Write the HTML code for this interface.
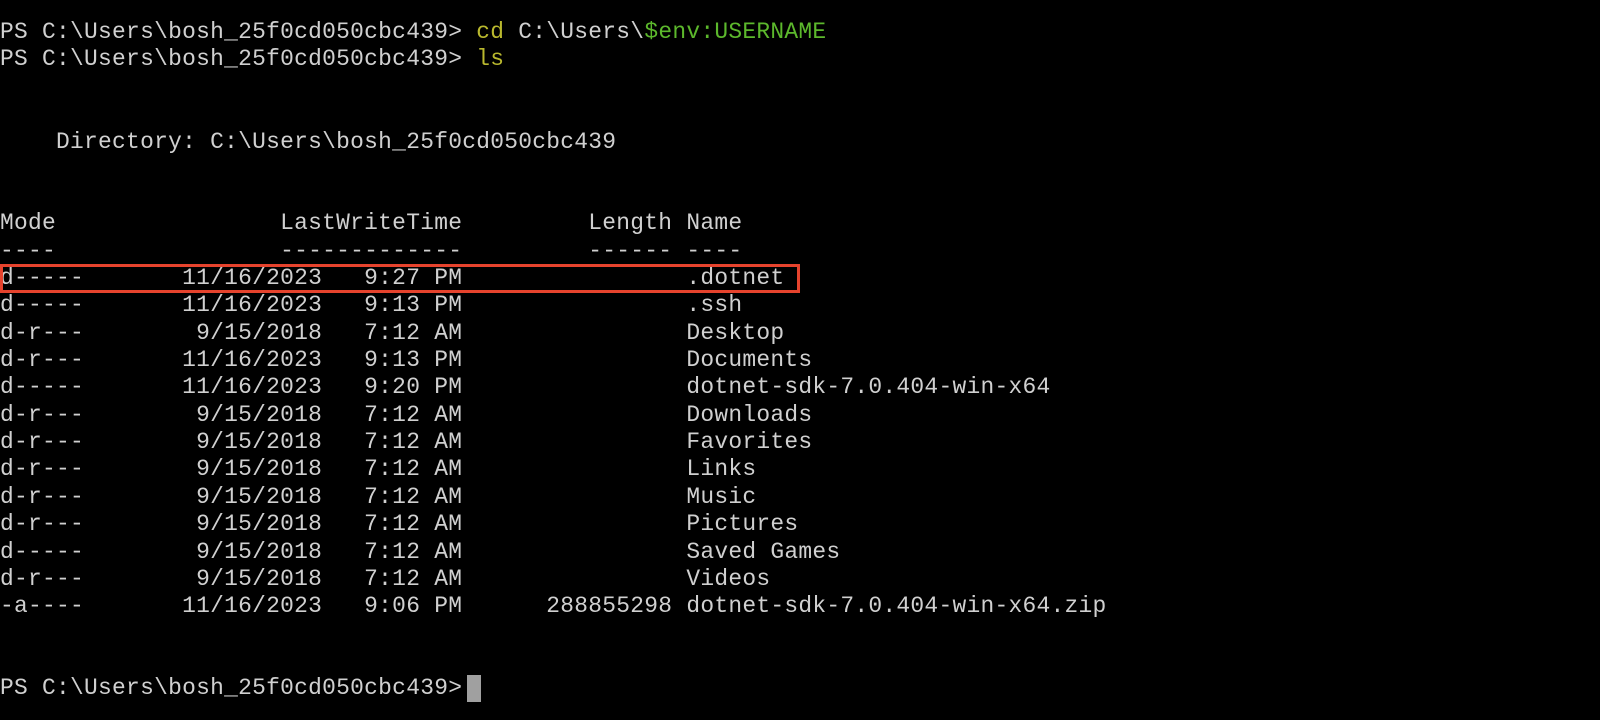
<!DOCTYPE html>
<html><head><meta charset="utf-8"><style>
html,body{margin:0;padding:0;background:#000;width:1600px;height:720px;overflow:hidden}
.l{position:absolute;left:0;height:27px;line-height:27px;white-space:pre;font-family:"Liberation Mono",monospace;font-size:22.9px;letter-spacing:0.27px;color:#d0d0d0;margin-top:1.5px}
.y{color:#b9b82e}.g{color:#5cb82c}
.box{position:absolute;left:0;top:264px;width:794px;height:23px;border:3px solid #e6432d}
.cur{position:absolute;left:467px;top:675px;width:14px;height:27px;background:#a0a0a0}
</style></head><body>
<div class="l" style="top:17.5px">PS C:\Users\bosh_25f0cd050cbc439&gt; <span class="y">cd</span> C:\Users\<span class="g">$env:USERNAME</span></div>
<div class="l" style="top:44.9px">PS C:\Users\bosh_25f0cd050cbc439&gt; <span class="y">ls</span></div>
<div class="l" style="top:127px">    Directory: C:\Users\bosh_25f0cd050cbc439</div>
<div class="l" style="top:208.6px">Mode                LastWriteTime         Length Name</div>
<div class="l" style="top:236px">----                -------------         ------ ----</div>
<div class="l" style="top:263.3px">d-----       11/16/2023   9:27 PM                .dotnet</div>
<div class="l" style="top:290.7px">d-----       11/16/2023   9:13 PM                .ssh</div>
<div class="l" style="top:318.1px">d-r---        9/15/2018   7:12 AM                Desktop</div>
<div class="l" style="top:345.5px">d-r---       11/16/2023   9:13 PM                Documents</div>
<div class="l" style="top:372.8px">d-----       11/16/2023   9:20 PM                dotnet-sdk-7.0.404-win-x64</div>
<div class="l" style="top:400.2px">d-r---        9/15/2018   7:12 AM                Downloads</div>
<div class="l" style="top:427.6px">d-r---        9/15/2018   7:12 AM                Favorites</div>
<div class="l" style="top:454.9px">d-r---        9/15/2018   7:12 AM                Links</div>
<div class="l" style="top:482.3px">d-r---        9/15/2018   7:12 AM                Music</div>
<div class="l" style="top:509.7px">d-r---        9/15/2018   7:12 AM                Pictures</div>
<div class="l" style="top:537.1px">d-----        9/15/2018   7:12 AM                Saved Games</div>
<div class="l" style="top:564.4px">d-r---        9/15/2018   7:12 AM                Videos</div>
<div class="l" style="top:591.8px">-a----       11/16/2023   9:06 PM      288855298 dotnet-sdk-7.0.404-win-x64.zip</div>
<div class="l" style="top:673.9px">PS C:\Users\bosh_25f0cd050cbc439&gt; </div>
<div class="box"></div>
<div class="cur"></div>
</body></html>
